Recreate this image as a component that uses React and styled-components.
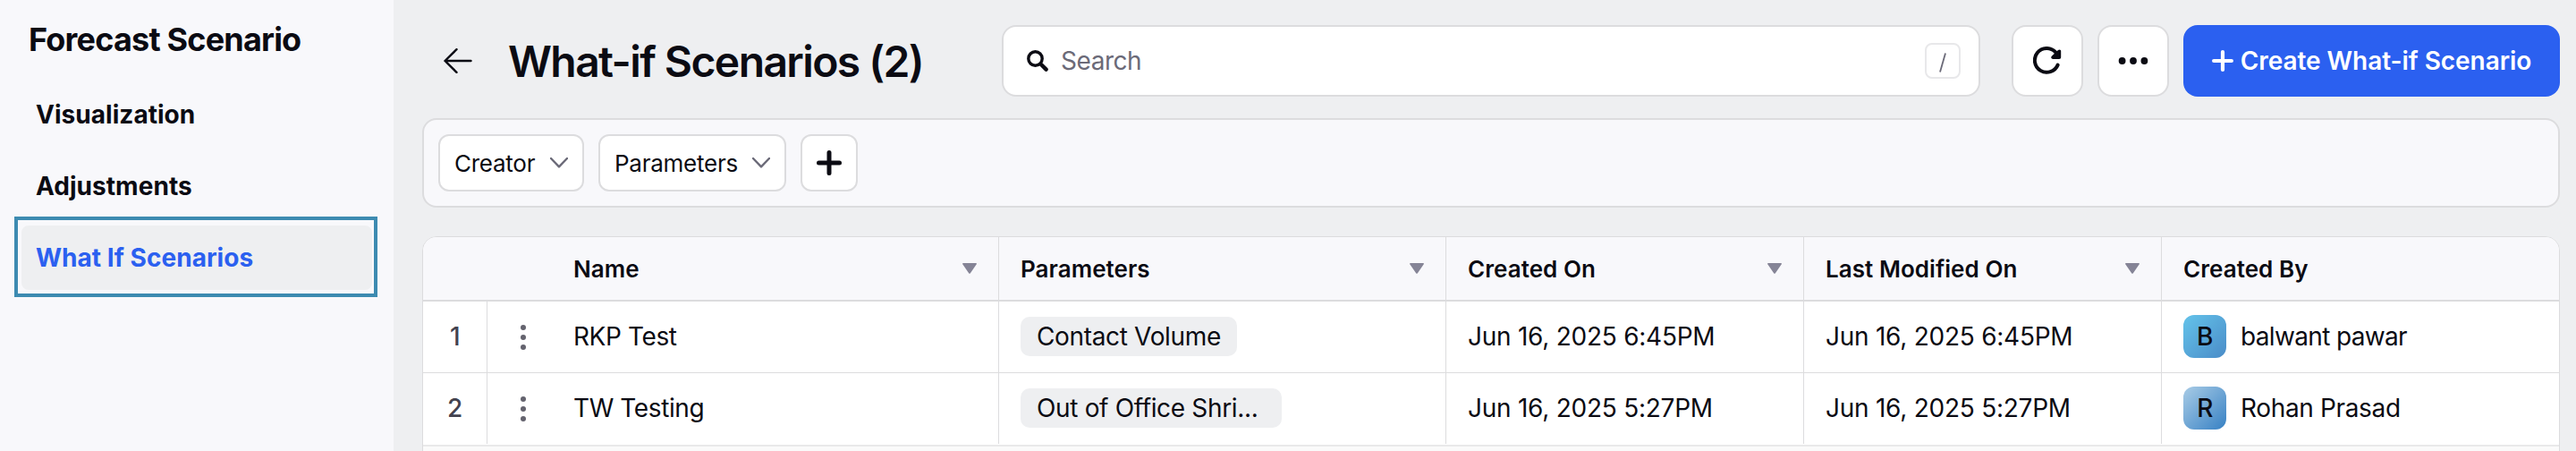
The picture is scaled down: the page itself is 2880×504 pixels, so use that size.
import styled, { createGlobalStyle, css } from 'styled-components'

const colour = {
  text: '#0b0b13',
  muted: '#6b6a78',
  index: '#43424f',
  accent: '#2b60f0',
  page: '#eeeff1',
  panel: '#f8f8fb',
  border: '#dcdcde',
  focus: '#3d8bb1'
}

const navItems = ['Visualization', 'Adjustments', 'What If Scenarios']

const columns = ['Name', 'Parameters', 'Created On', 'Last Modified On']

const scenarios = [
  {
    name: 'RKP Test',
    parameter: 'Contact Volume',
    date: 'Jun 16, 2025 6:45PM',
    author: 'balwant pawar',
    tracking: '-0.65px',
    from: '#64c3ea',
    to: '#4a8cc8'
  },
  {
    name: 'TW Testing',
    parameter: 'Out of Office Shrinkage',
    short: 'Out of Office Shri...',
    date: 'Jun 16, 2025 5:27PM',
    author: 'Rohan Prasad',
    tracking: '-0.35px',
    from: '#a9cce6',
    to: '#3781c4'
  }
]

export default function App() {
  return (
    <Page>
      <GlobalStyle />
      <Sidebar>
        <SidebarTitle>Forecast Scenario</SidebarTitle>
        <Nav>
          {navItems.map(item =>
            item === 'What If Scenarios' ? (
              <FocusFrame key={item}>
                <NavItem $active>{item}</NavItem>
              </FocusFrame>
            ) : (
              <NavItem key={item}>{item}</NavItem>
            )
          )}
        </Nav>
      </Sidebar>
      <Main>
        <Toolbar>
          <BackButton aria-label='Back'>
            <BackIcon />
          </BackButton>
          <Title>What-if Scenarios (2)</Title>
          <SearchBox>
            <SearchIcon />
            <SearchText>Search</SearchText>
            <Shortcut>
              <SlashIcon />
            </Shortcut>
          </SearchBox>
          <Actions>
            <IconButton aria-label='Refresh'>
              <RefreshIcon />
            </IconButton>
            <IconButton aria-label='More'>
              <MoreIcon />
            </IconButton>
            <CreateButton>
              <PlusIcon size={24} weight={4.2} />
              Create What-if Scenario
            </CreateButton>
          </Actions>
        </Toolbar>
        <FilterBar>
          <Filter $width={163}>
            Creator <ChevronIcon />
          </Filter>
          <Filter $width={210}>
            Parameters <ChevronIcon />
          </Filter>
          <AddFilter aria-label='Add filter'>
            <PlusIcon size={28} weight={5} />
          </AddFilter>
        </FilterBar>
        <Table>
          <HeaderRow>
            {columns.map((column, i) => (
              <HeaderCell key={column} $first={i === 0}>
                {column}
                <SortIcon />
              </HeaderCell>
            ))}
            <HeaderCell>Created By</HeaderCell>
          </HeaderRow>
          {scenarios.map((scenario, i) => (
            <Row key={scenario.name} $last={i === scenarios.length - 1}>
              <IndexCell>{i + 1}</IndexCell>
              <NameCell>
                <KebabIcon />
                {scenario.name}
              </NameCell>
              <Cell>
                <Pill title={scenario.parameter} $clipped={!!scenario.short}>
                  {scenario.short || scenario.parameter}
                </Pill>
              </Cell>
              <DateCell>{scenario.date}</DateCell>
              <DateCell>{scenario.date}</DateCell>
              <Cell>
                <Avatar $from={scenario.from} $to={scenario.to}>
                  {scenario.author[0].toUpperCase()}
                </Avatar>
                <Author $tracking={scenario.tracking}>{scenario.author}</Author>
              </Cell>
            </Row>
          ))}
          <TableFooter />
        </Table>
      </Main>
    </Page>
  )
}

function BackIcon() {
  return (
    <svg width='32' height='28' viewBox='0 0 32 28' fill='none'>
      <path
        d='M1.5 14H30.5M14.5 1.2L1.5 14L14.5 26.8'
        stroke={colour.text}
        strokeWidth='2.4'
        strokeLinecap='round'
        strokeLinejoin='round'
      />
    </svg>
  )
}

function SearchIcon() {
  return (
    <svg width='24' height='24' viewBox='0 0 24 24' fill='none'>
      <circle cx='9.5' cy='9.5' r='7.7' stroke={colour.text} strokeWidth='3.4' />
      <path
        d='M16 16L21.6 21.6'
        stroke={colour.text}
        strokeWidth='4.4'
        strokeLinecap='round'
      />
    </svg>
  )
}

function SlashIcon() {
  return (
    <svg width='8' height='22' viewBox='0 0 8 22' fill='none'>
      <path d='M7 0.5L1 21.5' stroke={colour.muted} strokeWidth='1.8' />
    </svg>
  )
}

function RefreshIcon() {
  return (
    <svg width='32' height='32' viewBox='0 0 32 32' fill='none'>
      <path
        d='M27.6 20.6A13.4 13.4 0 1 1 25.2 6.4'
        stroke={colour.text}
        strokeWidth='4'
        strokeLinecap='round'
      />
      <path
        d='M29.6 3.4C30.6 3.4 31.2 4.2 31.2 5.2V12C31.2 13.2 30.4 14 29.2 14H22.2C20.2 14 19.6 12 20.8 10.8L28 4.1C28.5 3.6 29 3.4 29.6 3.4Z'
        fill={colour.text}
      />
    </svg>
  )
}

function MoreIcon() {
  return (
    <svg width='34' height='8' viewBox='0 0 34 8' fill={colour.text}>
      <circle cx='4.6' cy='4' r='3.9' />
      <circle cx='17' cy='4' r='3.9' />
      <circle cx='29.4' cy='4' r='3.9' />
    </svg>
  )
}

function PlusIcon({ size, weight }) {
  const end = size - weight / 2
  return (
    <svg width={size} height={size} viewBox={`0 0 ${size} ${size}`}>
      <path
        d={`M${size / 2} ${weight / 2}V${end}M${weight / 2} ${size / 2}H${end}`}
        stroke='currentColor'
        strokeWidth={weight}
        strokeLinecap='round'
      />
    </svg>
  )
}

function ChevronIcon() {
  return (
    <svg width='20' height='12' viewBox='0 0 20 12' fill='none'>
      <path
        d='M1 1L10 10.4L19 1'
        stroke={colour.muted}
        strokeWidth='2.4'
        strokeLinecap='round'
        strokeLinejoin='round'
      />
    </svg>
  )
}

function SortIcon() {
  return (
    <svg width='16' height='12' viewBox='0 0 16 12'>
      <path
        d='M0.8 0H15.2Q16.4 0.2 15.6 1.4L8.7 11.4Q8 12.2 7.3 11.4L0.4 1.4Q-0.4 0.2 0.8 0Z'
        fill='#858496'
      />
    </svg>
  )
}

function KebabIcon() {
  return (
    <svg width='6' height='28' viewBox='0 0 6 28' fill='#64636e'>
      <circle cx='3' cy='3' r='3' />
      <circle cx='3' cy='14' r='3' />
      <circle cx='3' cy='25' r='3' />
    </svg>
  )
}

const GlobalStyle = createGlobalStyle`
  * {
    box-sizing: border-box;
  }

  body {
    margin: 0;
    background: ${colour.page};
    color: ${colour.text};
    font-family: Inter, 'Liberation Sans', sans-serif;
  }

  button {
    padding: 0;
    color: inherit;
    font: inherit;
  }

  svg {
    flex: none;
    display: block;
  }
`

const Page = styled.div`
  display: flex;
  height: 504px;
  overflow: hidden;
`

const Sidebar = styled.aside`
  width: 440px;
  flex: none;
  padding: 22px 18px 0 16px;
  background: ${colour.panel};
`

const SidebarTitle = styled.h2`
  margin: 0 0 26px 16px;
  font-size: 36px;
  font-weight: 700;
  line-height: 44px;
  letter-spacing: -0.8px;
`

const Nav = styled.nav`
  display: flex;
  flex-direction: column;
`

const NavItem = styled.a`
  display: flex;
  align-items: center;
  height: 72px;
  margin: 0 6px 8px 8px;
  padding-left: 16px;
  border-radius: 8px;
  font-size: 28px;
  font-weight: 700;
  letter-spacing: 0.04px;
  ${props =>
    props.$active &&
    css`
      margin: 0;
      background: ${colour.page};
      color: ${colour.accent};
    `}
`

const FocusFrame = styled.div`
  margin-top: -10px;
  padding: 6px 2px 4px 4px;
  border: 4px solid ${colour.focus};
`

const Main = styled.main`
  flex: 1;
  min-width: 0;
  padding: 28px 18px 0 32px;
`

const Toolbar = styled.header`
  display: flex;
  align-items: center;
  height: 80px;
`

const BackButton = styled.button`
  display: flex;
  margin-left: 24px;
  border: none;
  background: none;
`

const Title = styled.h1`
  width: 552px;
  margin: 0 0 0 40px;
  padding-top: 2px;
  font-size: 48px;
  font-weight: 600;
  line-height: 58px;
  letter-spacing: -1.6px;
  white-space: nowrap;
`

const SearchBox = styled.div`
  display: flex;
  align-items: center;
  width: 1094px;
  height: 80px;
  padding: 0 20px 0 26px;
  border: 2px solid ${colour.border};
  border-radius: 16px;
  background: #fff;
`

const SearchText = styled.span`
  flex: 1;
  margin-left: 14px;
  color: ${colour.muted};
  font-size: 28px;
  letter-spacing: -0.45px;
`

const Shortcut = styled.kbd`
  display: flex;
  align-items: center;
  justify-content: center;
  width: 40px;
  height: 40px;
  padding-top: 4px;
  border: 2px solid #e8e8ea;
  border-radius: 8px;
`

const Actions = styled.div`
  display: flex;
  gap: 16px;
  margin-left: auto;
`

const IconButton = styled.button`
  display: flex;
  align-items: center;
  justify-content: center;
  width: 80px;
  height: 80px;
  border: 2px solid ${colour.border};
  border-radius: 16px;
  background: #fff;
`

const CreateButton = styled.button`
  display: flex;
  align-items: center;
  justify-content: center;
  gap: 8px;
  width: 421px;
  height: 80px;
  border: none;
  border-radius: 16px;
  background: ${colour.accent};
  color: #fff;
  font-size: 28px;
  font-weight: 600;
  letter-spacing: -0.05px;
`

const FilterBar = styled.section`
  display: flex;
  align-items: center;
  gap: 16px;
  height: 100px;
  margin-top: 24px;
  padding: 0 16px;
  border: 2px solid ${colour.border};
  border-radius: 16px;
  background: ${colour.panel};
`

const Filter = styled.button`
  display: flex;
  align-items: center;
  justify-content: space-between;
  width: ${props => props.$width}px;
  height: 64px;
  padding: 0 16px;
  border: 2px solid ${colour.border};
  border-radius: 12px;
  background: #fff;
  font-size: 26px;
  letter-spacing: -0.25px;
`

const AddFilter = styled(IconButton)`
  width: 64px;
  height: 64px;
  border-radius: 12px;
`

const Table = styled.section`
  height: 260px;
  margin-top: 32px;
  border: 1px solid ${colour.border};
  border-radius: 16px 16px 0 0;
  background: #fff;
  overflow: hidden;
`

const HeaderRow = styled.div`
  display: grid;
  grid-template-columns: 644px 500px 400px 400px 1fr;
  height: 72px;
  border-bottom: 2px solid ${colour.border};
  background: ${colour.panel};
`

const HeaderCell = styled.div`
  display: flex;
  align-items: center;
  justify-content: space-between;
  padding: 0 24px 0 ${props => (props.$first ? 168 : 24)}px;
  border-right: 1px solid ${colour.border};
  font-size: 26px;
  font-weight: 600;
  letter-spacing: 0.05px;

  &:last-child {
    border-right: none;
  }
`

const Row = styled.div`
  display: grid;
  grid-template-columns: 72px 572px 500px 400px 400px 1fr;
  height: 80px;
  border-bottom: 1px solid ${props => (props.$last ? '#fff' : colour.border)};
`

const Cell = styled.div`
  display: flex;
  align-items: center;
  padding: 0 0 1px 24px;
  border-right: 1px solid ${colour.border};
  font-size: 28px;
  letter-spacing: -0.4px;

  &:last-child {
    border-right: none;
  }
`

const IndexCell = styled(Cell)`
  justify-content: center;
  padding-left: 0;
  color: ${colour.index};
  font-weight: 500;
`

const NameCell = styled(Cell)`
  gap: 53px;
  padding-left: 37px;

  svg {
    margin-top: 2px;
  }
`

const DateCell = styled(Cell)`
  letter-spacing: -0.25px;
`

const Pill = styled.span`
  width: ${props => (props.$clipped ? '292px' : 'auto')};
  height: 44px;
  padding: 0 18px;
  border-radius: 10px;
  background: ${colour.page};
  line-height: 44px;
  letter-spacing: -0.34px;
`

const Avatar = styled.span`
  width: 48px;
  height: 48px;
  border-radius: 12px;
  background: linear-gradient(
    135deg,
    ${props => props.$from},
    ${props => props.$to}
  );
  font-weight: 500;
  line-height: 48px;
  text-align: center;
`

const Author = styled.span`
  margin-left: 16px;
  letter-spacing: ${props => props.$tracking};
`

const TableFooter = styled.div`
  height: 40px;
  border-top: 2px solid #e9e9ea;
  background: #fafafa;
`
